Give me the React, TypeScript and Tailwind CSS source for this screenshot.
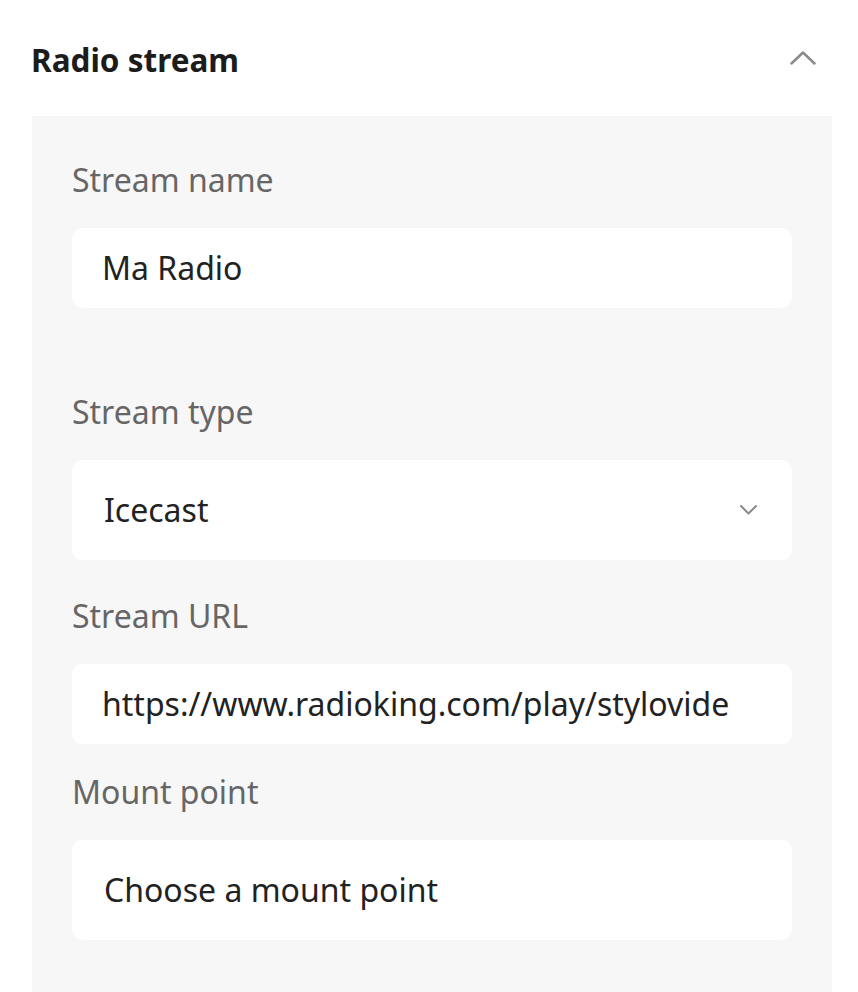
const font = { fontFamily: '"Noto Sans", "Open Sans", sans-serif' };

const Label = ({ text, className }: { text: string; className: string }) => (
  <p className={`text-[32px] leading-[40px] text-[#666666] ${className}`}>{text}</p>
);

const Field = ({ value, tall, className }: { value: string; tall?: boolean; className: string }) => (
  <div
    className={`flex w-[720px] items-center rounded-[10px] bg-white text-[32px] leading-[40px] text-[#222222] ${
      tall ? "h-[100px] pl-8 pr-8" : "h-[80px] pl-[30px] pr-4"
    } ${className}`}
  >
    <span className="whitespace-nowrap">{value}</span>
  </div>
);

const SelectField = ({ value, className }: { value: string; className: string }) => (
  <div
    className={`flex h-[100px] w-[720px] items-center justify-between rounded-[10px] bg-white pl-8 pr-[35px] text-[32px] leading-[40px] text-[#222222] ${className}`}
  >
    <span>{value}</span>
    <svg width="17" height="10" viewBox="0 0 17 10" fill="none">
      <polyline points="1,1 8.5,8.5 16,1" stroke="#8a8a8a" strokeWidth="2" strokeLinecap="round" strokeLinejoin="round" />
    </svg>
  </div>
);

export default function App() {
  return (
    <div className="h-[992px] w-[858px] overflow-hidden bg-white" style={font}>
      <div className="ml-8 flex h-[116px] w-[800px] items-start justify-between pr-[16px] pt-10">
        <h2 className="-ml-px text-[31.5px] font-bold leading-[40px] text-[#1c1c1c]">Radio stream</h2>
        <svg width="26" height="14" viewBox="0 0 26 14" fill="none" className="mt-[11px]">
          <polyline points="1.5,12.5 13,1.5 24.5,12.5" stroke="#8a8a8a" strokeWidth="2.5" strokeLinecap="round" strokeLinejoin="round" />
        </svg>
      </div>

      <div className="ml-8 w-[800px] bg-[#f7f7f7] px-10 pb-[52px] pt-11">
        <Label text="Stream name" className="" />
        <Field value="Ma Radio" className="mt-7" />

        <Label text="Stream type" className="mt-[84px]" />
        <SelectField value="Icecast" className="mt-7" />

        <Label text="Stream URL" className="mt-9" />
        <Field value="https://www.radioking.com/play/stylovide" className="mt-7" />

        <Label text="Mount point" className="mt-7" />
        <Field value="Choose a mount point" tall className="mt-7" />
      </div>
    </div>
  );
}
